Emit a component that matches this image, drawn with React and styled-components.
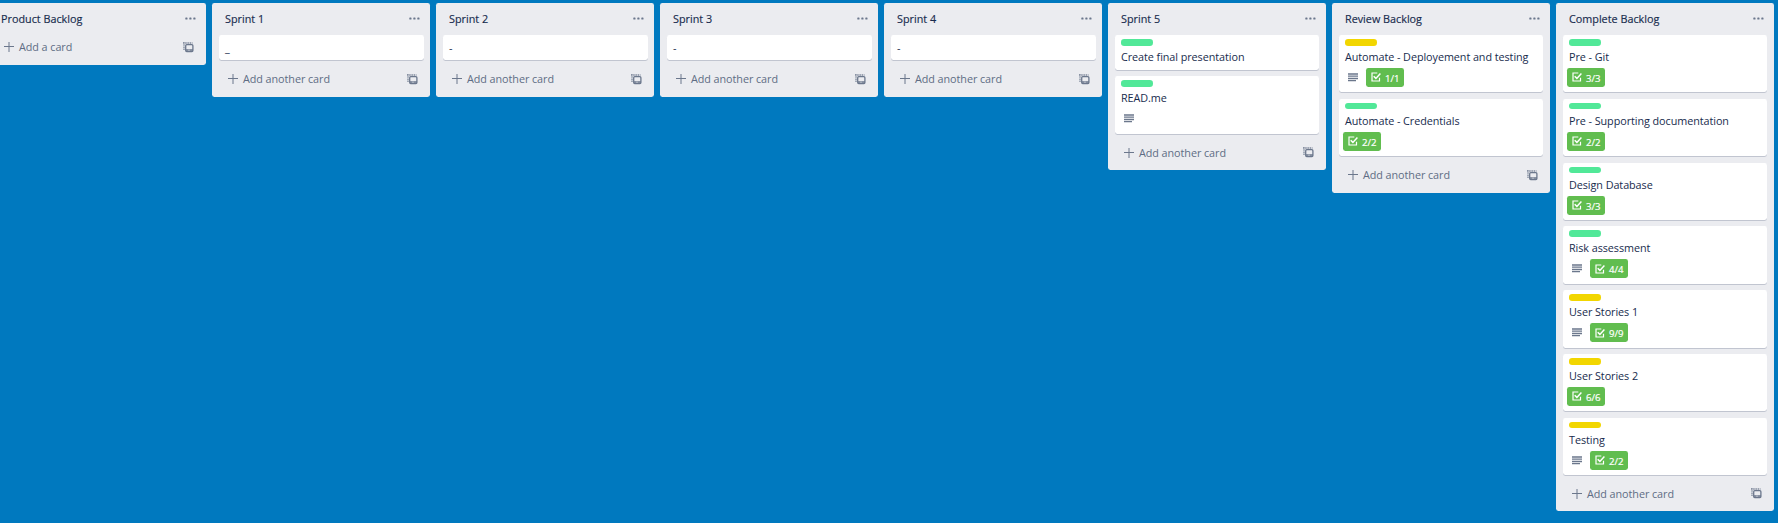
import React from 'react';
import styled, { createGlobalStyle } from 'styled-components';

const GlobalStyle = createGlobalStyle`
  * { box-sizing: border-box; }
  html, body { margin: 0; padding: 0; background: #fff; }
  body { overflow: hidden; font-family: "Open Sans", "Noto Sans", sans-serif; font-size: 10.8px; color: #172b4d; }
`;

const Board = styled.main`
  width: 1778px;
  height: 523px;
  padding-top: 3px;
  background: #0079bf;
  display: flex;
  align-items: flex-start;
  gap: 6px;
  overflow: hidden;
`;

const List = styled.section`
  flex: 0 0 218px;
  background: #ebecf0;
  border-radius: 2.4px;
  &:first-child { margin-left: -12px; }
`;

const ListHeader = styled.header`
  height: 32px;
  padding: 0 10px 1px 13px;
  display: flex;
  align-items: center;
  justify-content: space-between;
`;

const ListTitle = styled.h2`
  margin: 0;
  font-size: 10.8px;
  font-weight: 500;
  line-height: 16px;
  white-space: nowrap;
  -webkit-text-stroke: 0.15px #172b4d;
`;

const Cards = styled.div`
  padding: 0 ${(p) => (p.$plain ? 6 : 7)}px 0 7px;
`;

const Card = styled.article`
  height: ${(p) => p.$height}px;
  margin-bottom: 6.4px;
  padding: ${(p) => (p.$plain ? 5 : 4)}px 6px 0;
  background: #fff;
  border-radius: 2.4px;
  box-shadow: 0 1px 0 #c1c5d0;
`;

const Label = styled.div`
  width: 32px;
  height: 6.6px;
  border-radius: 3.2px;
  background: ${(p) => (p.$color === 'lime' ? '#51e898' : '#f2d600')};
  margin-bottom: 3.4px;
`;

const CardTitle = styled.div`
  height: 16px;
  line-height: 16px;
  white-space: nowrap;
  letter-spacing: -0.06px;
`;

const Badges = styled.div`
  display: flex;
  align-items: center;
  gap: 4px;
  margin: 3px 0 0 -2px;
  height: 19px;
`;

const IconBadge = styled.span`
  width: 19px;
  height: 19px;
  padding: 5px 4px 5px 5px;
  display: flex;
  color: #6b778c;
`;

const CheckBadge = styled.span`
  width: 38px;
  height: 19px;
  padding-left: 5px;
  display: flex;
  align-items: center;
  gap: 4px;
  border-radius: 2.4px;
  background: #61bd4f;
  color: #fff;
  font-size: 9.6px;
  line-height: 19px;
  -webkit-text-stroke: 0.2px #fff;
`;

const CheckCount = styled.span`
  padding-top: 2px;
  line-height: 17px;
`;

const Footer = styled.footer`
  height: 30px;
  padding: 0 12px ${(p) => (p.$empty ? 6 : 5)}px 16px;
  display: flex;
  align-items: center;
  color: #5e6c84;
`;

const AddText = styled.span`
  flex: 1;
  margin-left: 5px;
  line-height: 16px;
  letter-spacing: -0.06px;
`;

const DotsIcon = styled.svg`
  display: block;
  width: 11px;
  height: 3px;
  margin-bottom: 1px;
`;

const Dots = () => (
  <DotsIcon viewBox="0 0 11 3" fill="#6b778c">
    <rect x="0.3" y="0.4" width="2.2" height="2.2" rx="0.6" />
    <rect x="4.3" y="0.4" width="2.2" height="2.2" rx="0.6" />
    <rect x="8.3" y="0.4" width="2.2" height="2.2" rx="0.6" />
  </DotsIcon>
);

const Plus = () => (
  <svg width="10" height="10" viewBox="0 0 10 10" stroke="#6b778c" fill="none">
    <path d="M5 0v10M0 4.5h10" />
  </svg>
);

const Template = () => (
  <svg width="11" height="11" viewBox="0 0 11 11" fill="none" stroke="#6b778c">
    <path d="M1 0v8.5M0 1h9.5" strokeDasharray="1.5 .7" strokeWidth="1.3" opacity="0.85" />
    <rect x="2.7" y="2.7" width="7.2" height="6.8" rx="1" strokeWidth="1.3" />
    <path d="M3 7h7v2.5H3z" fill="#6b778c" stroke="none" opacity="0.75" />
    <path d="M5.5 8.2h1" stroke="#ebecf0" />
  </svg>
);

const Lines = () => (
  <svg width="10" height="9" viewBox="0 0 10 9" stroke="currentColor" fill="none">
    <path d="M0 1h10M0 3.2h10M0 5.5h10M0 7.7h8" strokeWidth="1.3" />
  </svg>
);

const Check = () => (
  <svg width="10" height="10" viewBox="0 0 10 10" stroke="#fff" fill="none">
    <path d="M6.3 1H1v8h7.5V5.7" strokeWidth="1.2" />
    <path d="M2.7 4.2l2.2 2.2L9.4 1.5" strokeWidth="1.5" />
  </svg>
);

const lists = [
  { title: 'Product Backlog', cards: [] },
  { title: 'Sprint 1', cards: [{ title: '_' }] },
  { title: 'Sprint 2', cards: [{ title: '-' }] },
  { title: 'Sprint 3', cards: [{ title: '-' }] },
  { title: 'Sprint 4', cards: [{ title: '-' }] },
  {
    title: 'Sprint 5',
    cards: [
      { title: 'Create final presentation', label: 'lime' },
      { title: 'READ.me', label: 'lime', desc: true },
    ],
  },
  {
    title: 'Review Backlog',
    cards: [
      { title: 'Automate - Deployement and testing', label: 'yellow', desc: true, check: '1/1' },
      { title: 'Automate - Credentials', label: 'lime', check: '2/2' },
    ],
  },
  {
    title: 'Complete Backlog',
    cards: [
      { title: 'Pre - Git', label: 'lime', check: '3/3' },
      { title: 'Pre - Supporting documentation', label: 'lime', check: '2/2' },
      { title: 'Design Database', label: 'lime', check: '3/3' },
      { title: 'Risk assessment', label: 'lime', desc: true, check: '4/4' },
      { title: 'User Stories 1', label: 'yellow', desc: true, check: '9/9' },
      { title: 'User Stories 2', label: 'yellow', check: '6/6' },
      { title: 'Testing', label: 'yellow', desc: true, check: '2/2' },
    ],
  },
];

const cardHeight = (c) => (c.desc || c.check ? 57.4 : c.label ? 35.1 : 25.2);

export default function App() {
  return (
    <>
      <GlobalStyle />
      <Board>
        {lists.map((list) => (
          <List key={list.title}>
            <ListHeader>
              <ListTitle>{list.title}</ListTitle>
              <Dots />
            </ListHeader>
            <Cards $plain={list.cards.every((c) => !c.label)}>
              {list.cards.map((c) => (
                <Card key={c.title} $height={cardHeight(c)} $plain={!c.label}>
                  {c.label && <Label $color={c.label} />}
                  <CardTitle>{c.title}</CardTitle>
                  {(c.desc || c.check) && (
                    <Badges>
                      {c.desc && <IconBadge><Lines /></IconBadge>}
                      {c.check && (
                        <CheckBadge>
                          <Check />
                          <CheckCount>{c.check}</CheckCount>
                        </CheckBadge>
                      )}
                    </Badges>
                  )}
                </Card>
              ))}
            </Cards>
            <Footer $empty={!list.cards.length}>
              <Plus />
              <AddText>{list.cards.length ? 'Add another card' : 'Add a card'}</AddText>
              <Template />
            </Footer>
          </List>
        ))}
      </Board>
    </>
  );
}
